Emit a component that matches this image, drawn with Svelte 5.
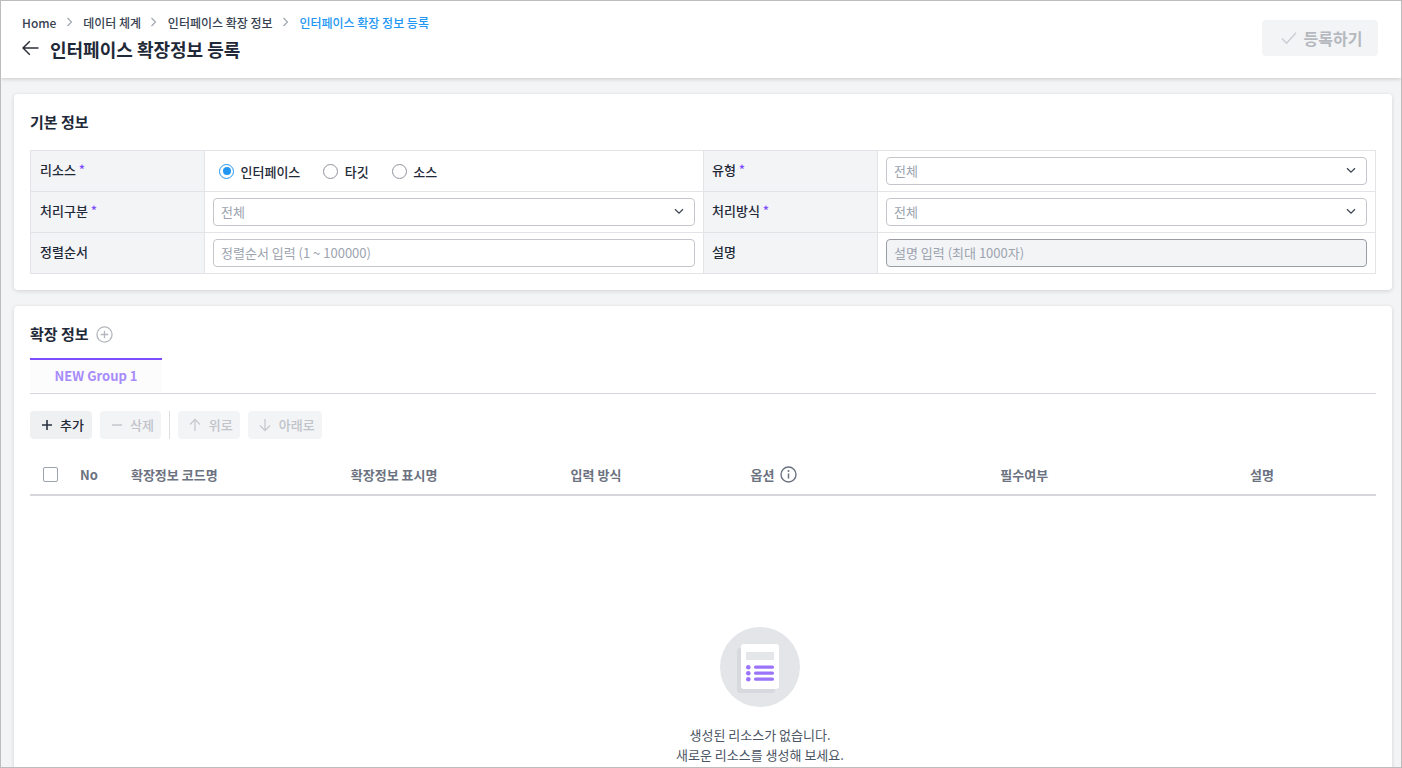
<script>
    const crumbs = ['Home', '데이터 체계', '인터페이스 확장 정보'];
    const columns = [
        { label: '확장정보 코드명', width: 220 },
        { label: '확장정보 표시명', width: 220 },
        { label: '입력 방식', width: 180 },
        { label: '옵션', width: 250, info: true },
        { label: '필수여부', width: 250 },
        { label: '설명', width: 126 }
    ];
</script>

<div class="frame">
    <header class="top">
        <div class="top-left">
            <nav class="crumbs">
                {#each crumbs as crumb}
                    <span class="crumb">{crumb}</span>
                    <svg class="sep" width="8" height="10" viewBox="0 0 8 10"><path d="M1.5 1l4 4-4 4" fill="none" stroke="#9ca3af" stroke-width="1.1"/></svg>
                {/each}
                <span class="crumb current">인터페이스 확장 정보 등록</span>
            </nav>
            <div class="title-row">
                <svg class="back" width="17" height="16" viewBox="0 0 17 16"><path d="M16.5 8H1M7.8 1.2L1 8l6.8 6.8" fill="none" stroke="#2b2f38" stroke-width="1.5"/></svg>
                <h1>인터페이스 확장정보 등록</h1>
            </div>
        </div>
        <button class="submit" disabled>
            <svg width="16" height="14" viewBox="0 0 16 14"><path d="M1 7.5l4.6 4.8L15 1.8" fill="none" stroke="#c9ccd2" stroke-width="1.3"/></svg>
            등록하기
        </button>
    </header>

    <main class="content">
        <section class="card">
            <h2>기본 정보</h2>
            <div class="form-table">
                <div class="th">리소스 <em>*</em></div>
                <div class="td radios">
                    <label class="radio"><span class="dot on"></span>인터페이스</label>
                    <label class="radio"><span class="dot"></span>타깃</label>
                    <label class="radio"><span class="dot"></span>소스</label>
                </div>
                <div class="th">유형 <em>*</em></div>
                <div class="td"><div class="field">전체{@render chevron()}</div></div>

                <div class="th">처리구분 <em>*</em></div>
                <div class="td"><div class="field">전체{@render chevron()}</div></div>
                <div class="th">처리방식 <em>*</em></div>
                <div class="td"><div class="field">전체{@render chevron()}</div></div>

                <div class="th">정렬순서</div>
                <div class="td"><div class="field">정렬순서 입력 (1 ~ 100000)</div></div>
                <div class="th">설명</div>
                <div class="td"><div class="field off">설명 입력 (최대 1000자)</div></div>
            </div>
        </section>

        <section class="card second">
            <div class="head">
                <h2>확장 정보</h2>
                <svg width="17" height="17" viewBox="0 0 18 18"><circle cx="9" cy="9" r="8" fill="none" stroke="#b4b7bd" stroke-width="1.4"/><path d="M9 5v8M5 9h8" stroke="#b4b7bd" stroke-width="1.4"/></svg>
            </div>
            <div class="tabs"><div class="tab">NEW Group 1</div></div>

            <div class="tools">
                <button class="tool wide active">
                    <svg width="12" height="12" viewBox="0 0 12 12"><path d="M6 1v10M1 6h10" stroke="#2b3240" stroke-width="1.6"/></svg>
                    추가
                </button>
                <button class="tool wide tight" disabled>
                    <svg width="12" height="12" viewBox="0 0 12 12"><path d="M1 6h10" stroke="#c6c9cf" stroke-width="1.6"/></svg>
                    삭제
                </button>
                <span class="divider"></span>
                <button class="tool tight" disabled>
                    <svg width="14" height="14" viewBox="0 0 14 14"><path d="M7 13V2M2 6.5L7 1.5l5 5" fill="none" stroke="#c6c9cf" stroke-width="1.3"/></svg>
                    위로
                </button>
                <button class="tool tight" disabled>
                    <svg width="14" height="14" viewBox="0 0 14 14"><path d="M7 1v11M2 7.5l5 5 5-5" fill="none" stroke="#c6c9cf" stroke-width="1.3"/></svg>
                    아래로
                </button>
            </div>

            <div class="grid-head">
                <span class="check"></span>
                <span class="no">No</span>
                {#each columns as col}
                    <span class="col" style="width:{col.width}px">
                        {col.label}
                        {#if col.info}
                            <svg width="17" height="17" viewBox="0 0 17 17"><circle cx="8.5" cy="8.5" r="7.5" fill="none" stroke="#6b7280" stroke-width="1.4"/><path d="M8.5 7.5v5" stroke="#6b7280" stroke-width="1.5"/><circle cx="8.5" cy="5" r="1" fill="#6b7280"/></svg>
                        {/if}
                    </span>
                {/each}
            </div>

            <div class="empty">
                <div class="badge">
                    <svg width="80" height="80" viewBox="0 0 80 80">
                        <rect x="17" y="21" width="38" height="45" rx="3" fill="#d8d9de"/>
                        <rect x="21" y="17" width="38" height="45" rx="3" fill="#fff"/>
                        <rect x="26" y="25" width="28" height="8" rx="1" fill="#e5e6e9"/>
                        <g fill="#9b74fb">
                            <circle cx="28.3" cy="40.2" r="2.3"/><rect x="34" y="38.6" width="20" height="3.2" rx="1.6"/>
                            <circle cx="28.3" cy="46.2" r="2.3"/><rect x="34" y="44.6" width="20" height="3.2" rx="1.6"/>
                            <circle cx="28.3" cy="52.2" r="2.3"/><rect x="34" y="50.6" width="20" height="3.2" rx="1.6"/>
                        </g>
                    </svg>
                </div>
                <p>생성된 리소스가 없습니다.<br>새로운 리소스를 생성해 보세요.</p>
            </div>
        </section>
    </main>
</div>

{#snippet chevron()}
    <svg class="chev" width="10" height="7" viewBox="0 0 10 7"><path d="M1 1.2L5 5.2l4-4" fill="none" stroke="#3f4652" stroke-width="1.3"/></svg>
{/snippet}

<style>
    :global(body) {
        margin: 0;
        font-family: "Noto Sans CJK KR", "Noto Sans", sans-serif;
    }
    .frame {
        box-sizing: border-box;
        height: 768px;
        border: 1px solid #bdbdbd;
        background: #f3f4f6;
        overflow: hidden;
    }
    .top {
        height: 77px;
        box-sizing: border-box;
        background: #fff;
        box-shadow: 0 1px 4px rgba(0, 0, 0, 0.18);
        display: flex;
        justify-content: space-between;
        padding: 11px 23px 0 21px;
        position: relative;
    }
    .crumbs {
        display: flex;
        align-items: center;
        height: 20px;
        font-size: 12px;
        font-weight: 500;
        color: #374151;
    }
    .sep {
        margin: 0 9.4px;
    }
    .current {
        color: #2196f3;
    }
    .title-row {
        display: flex;
        align-items: center;
        gap: 11px;
        margin-top: 4px;
    }
    .back {
        margin-top: -3px;
    }
    h1 {
        margin: 0;
        font-size: 18px;
        line-height: 26px;
        font-weight: 700;
        color: #1f2937;
    }
    .submit {
        width: 116px;
        height: 36px;
        margin-top: 8px;
        padding: 0 0 0 3px;
        display: flex;
        align-items: center;
        justify-content: center;
        gap: 7px;
        border: none;
        border-radius: 4px;
        background: #f3f4f6;
        color: #b5b8be;
        font: 700 16px "Noto Sans CJK KR", sans-serif;
    }
    .content {
        padding: 16px 9px 0 13px;
    }
    .card {
        background: #fff;
        border-radius: 4px;
        box-shadow: 0 1px 4px rgba(0, 0, 0, 0.14);
        padding: 16px 16px;
        height: 196px;
        box-sizing: border-box;
    }
    h2 {
        margin: 0;
        font-size: 15px;
        line-height: 24px;
        font-weight: 700;
        color: #1f2937;
    }
    .form-table {
        margin-top: 16px;
        display: grid;
        grid-template-columns: 174px 499px 174px 498px;
        grid-auto-rows: 41px;
        border-top: 1px solid #e2e4e8;
        border-left: 1px solid #e2e4e8;
        width: 1346px;
        box-sizing: border-box;
        height: 124px;
    }
    .th, .td {
        box-sizing: border-box;
        border-right: 1px solid #e2e4e8;
        border-bottom: 1px solid #e2e4e8;
        display: flex;
        align-items: center;
    }
    .th {
        background: #f3f4f6;
        padding: 0 8px 3px;
        font-size: 13px;
        font-weight: 500;
        color: #1f2937;
        white-space: pre;
    }
    .th:nth-child(4n + 1) {
        padding-left: 9px;
    }
    .th em {
        font-style: normal;
        color: #7c4dff;
    }
    .td {
        padding: 0 8px;
    }
    .field {
        width: 100%;
        height: 28px;
        box-sizing: border-box;
        border: 1px solid #c4c6cb;
        border-radius: 4px;
        background: #fff;
        padding: 0 7px 1px;
        display: flex;
        align-items: center;
        justify-content: space-between;
        font-size: 13px;
        color: #9ca3af;
    }
    .field.off {
        background: #f3f4f6;
        border-color: #9a9da5;
    }
    .chev {
        margin-right: 3px;
    }
    .radios {
        gap: 23px;
        padding-left: 14px;
    }
    .radio {
        display: flex;
        align-items: center;
        gap: 6.5px;
        font-size: 13px;
        font-weight: 500;
        color: #1f2937;
    }
    .dot {
        width: 15px;
        height: 15px;
        box-sizing: border-box;
        border: 1px solid #8f939b;
        border-radius: 50%;
        position: relative;
    }
    .dot.on {
        border-color: #2196f3;
    }
    .dot.on::after {
        content: '';
        position: absolute;
        inset: 2.5px;
        border-radius: 50%;
        background: #2196f3;
    }
    .second {
        margin-top: 16px;
        height: 480px;
    }
    .head {
        display: flex;
        align-items: center;
        gap: 7px;
    }
    .tabs {
        margin-top: 12px;
        border-bottom: 1px solid #d5d7dc;
        height: 35px;
    }
    .tab {
        width: 132px;
        height: 34px;
        box-sizing: border-box;
        border-top: 2px solid #7c4dff;
        background: #fcfcfd;
        text-align: center;
        line-height: 31px;
        font-size: 13px;
        font-weight: 700;
        color: #a78bfa;
    }
    .tools {
        display: flex;
        align-items: center;
        gap: 8px;
        margin-top: 17px;
    }
    .tool {
        height: 28px;
        display: flex;
        align-items: center;
        gap: 7px;
        padding: 0 8px 2px 10px;
        border: none;
        border-radius: 4px;
        background: #f3f4f6;
        color: #c0c3c9;
        font: 500 13px "Noto Sans CJK KR", sans-serif;
    }
    .tool svg {
        margin-top: 2px;
    }
    .tool.wide {
        padding-left: 11px;
    }
    .tool.tight {
        padding-right: 7px;
    }
    .tool.active {
        background: #eef0f2;
        color: #1f2937;
    }
    .divider {
        width: 1px;
        height: 28px;
        background: #dcdee2;
    }
    .grid-head {
        margin-top: 17px;
        height: 40px;
        box-sizing: border-box;
        border-bottom: 2px solid #d5d7dc;
        padding-bottom: 2px;
        display: flex;
        align-items: center;
        font-size: 13px;
        font-weight: 700;
        color: #6b7280;
    }
    .check {
        width: 13px;
        height: 13px;
        border: 1px solid #9ca3af;
        border-radius: 2px;
        margin-left: 13px;
    }
    .no {
        width: 51px;
        margin-left: 22px;
    }
    .col {
        display: flex;
        align-items: center;
        gap: 6px;
    }
    .empty {
        display: flex;
        flex-direction: column;
        align-items: center;
        padding-left: 114px;
        margin-top: 131px;
    }
    .badge {
        width: 80px;
        height: 80px;
        border-radius: 50%;
        background: #e4e5e8;
    }
    .empty p {
        margin: 18px 0 0;
        text-align: center;
        font-size: 13px;
        line-height: 20px;
        color: #4b5563;
    }
</style>
